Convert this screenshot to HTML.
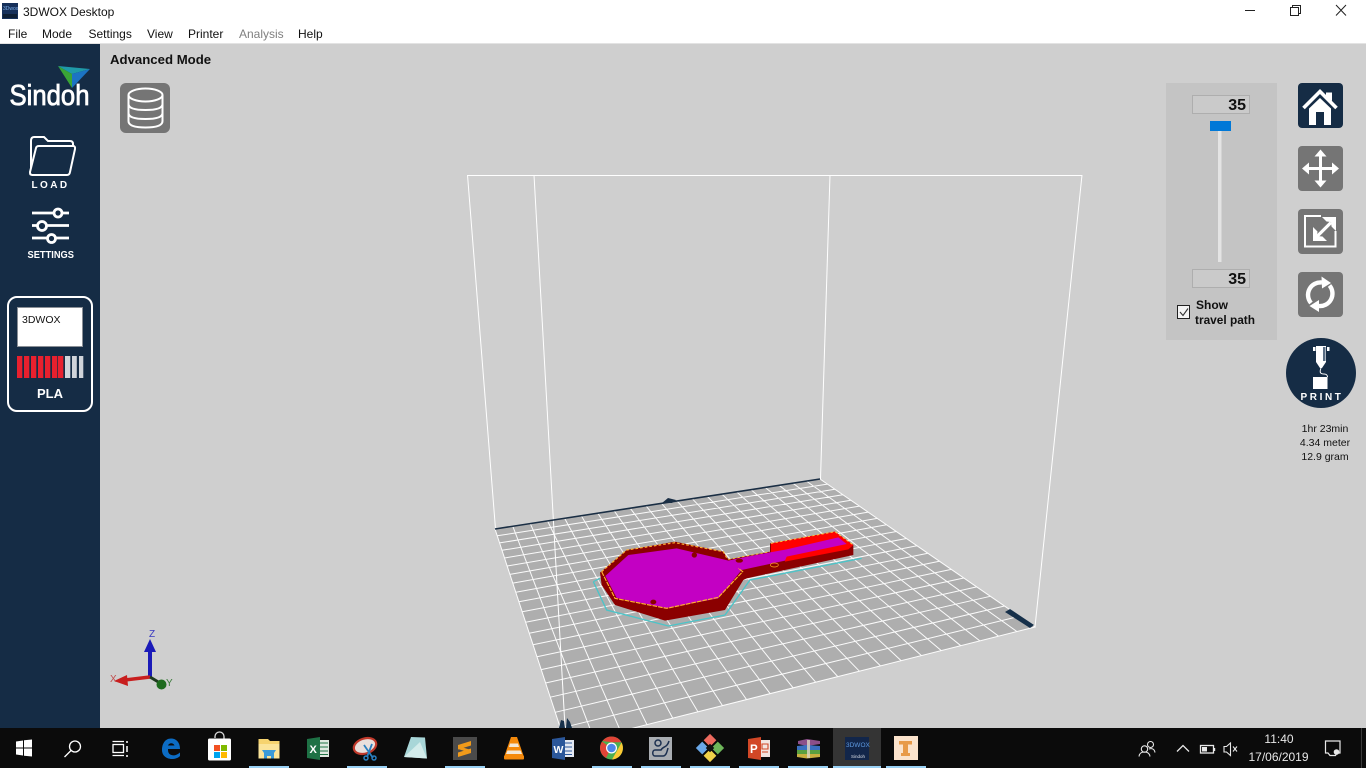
<!DOCTYPE html>
<html><head><meta charset="utf-8"><title>3DWOX Desktop</title>
<style>
html,body{margin:0;padding:0;width:1366px;height:768px;overflow:hidden;background:#cfcfcf}
svg#s{position:absolute;left:0;top:0;font-family:"Liberation Sans",sans-serif}
</style></head><body>
<svg id="s" width="1366" height="768" viewBox="0 0 1366 768" xmlns="http://www.w3.org/2000/svg">
<!-- bed -->
<path d="M495 529L820 479L1035 627L566 745Z" fill="#aeaeae"/>
<path fill="none" stroke="#fff" stroke-width="1" stroke-opacity=".95" d="
M512.8 526.3L593.6 738.1M530.3 523.6L620.6 731.3M547.5 520.9L647 724.7M564.6 518.3L672.8 718.2M581.3 515.7L697.9 711.8M597.8 513.2L722.5 705.6M614.1 510.7L746.6 699.6M630.2 508.2L770.2 693.7M646 505.8L793.2 687.9M661.6 503.4L815.7 682.2M677 501L837.8 676.6M692.2 498.7L859.4 671.2M707.2 496.4L880.5 665.9M721.9 494.1L901.2 660.7M736.5 491.8L921.5 655.6M750.9 489.6L941.3 650.6M765.1 487.4L960.8 645.7M779.1 485.3L979.9 640.9M792.9 483.2L998.6 636.2M806.5 481.1L1017 631.6
M497.2 535.8L827.3 484.1M499.6 542.9L834.9 489.3M502 550.3L842.8 494.7M504.5 558L850.9 500.3M507.2 566L859.4 506.1M509.9 574.4L868.1 512.1M512.8 583.1L877.1 518.4M515.8 592.2L886.5 524.8M518.9 601.8L896.3 531.5M522.2 611.8L906.4 538.5M525.6 622.2L917 545.8M529.2 633.2L927.9 553.3M533 644.7L939.4 561.2M537 656.8L951.3 569.4M541.2 669.6L963.7 578M545.6 683L976.7 586.9M550.3 697.2L990.3 596.3M555.2 712.3L1004.5 606M560.4 728.2L1019.4 616.3
M495 529L566 745M820 479L1035 627L566 745"/>

<!-- title + menu -->
<rect x="0" y="0" width="1366" height="43" fill="#fff"/>
<rect x="0" y="43" width="1366" height="1" fill="#e3e3e3"/>
<rect x="2" y="3" width="16" height="16" fill="#16305a"/>
<rect x="3" y="14" width="14" height="4" fill="#0d1e33"/>
<text x="3" y="10" font-size="5" fill="#7fb0ea">3Dwox</text>
<text x="23" y="16" font-size="12" fill="#111">3DWOX Desktop</text>
<g font-size="12" fill="#111">
<text x="8" y="38">File</text><text x="42" y="38">Mode</text><text x="88.5" y="38">Settings</text><text x="147" y="38">View</text><text x="188" y="38">Printer</text><text x="239" y="38" fill="#808080">Analysis</text><text x="298" y="38">Help</text>
</g>
<g stroke="#222" fill="none" stroke-width="1">
<path d="M1245 10.5H1255"/>
<path d="M1290.5 7.5H1298.5V15.5H1290.5Z M1292.5 7.5V5.5H1300.5V13.5H1298.5"/>
<path d="M1336 5L1346 15.5M1346 5L1336 15.5"/>
</g>

<!-- build volume -->
<g stroke="#fff" stroke-width="1" fill="none">
<path d="M467 175.5H1082"/>
<path d="M467.5 175L495.5 529"/>
<path d="M534 175L566 745"/>
<path d="M830 175L820.5 479"/>
<path d="M1082 175L1035 627"/>
</g>
<path d="M495 529L820 479" stroke="#1a2e44" stroke-width="1.6" fill="none"/>
<path d="M662 503L668 498L676 500L672 503Z" fill="#1a2e44"/>
<path d="M1005 612L1010 609L1034 625L1030 628Z" fill="#16304a"/>
<path d="M559 728L561 720L564 721L565 728ZM566 728L567 718L570 722L572 728Z" fill="#16304a"/>

<!-- model -->
<g transform="translate(590 520) scale(.33333)">
<path d="M10 185L30 175M10 185L50 270L235 318L405 285L480 180L815 115" fill="none" stroke="#4cc4c8" stroke-width="4"/>
<path d="M30 158L110 90L255 65L400 95L415 118L540 95L540 70L735 35L790 75L790 105L470 175L460 180L405 270L225 302L75 255L35 195Z" fill="#8b0000"/>
<path d="M543 70L735 35L790 75L775 88L585 125L585 100L543 100Z" fill="#ff0000"/>
<path d="M46 168L115 105L260 85L400 118L415 122L445 115L540 97L590 88L745 52L770 72L590 110L585 122L455 150L385 235L230 264L80 234Z" fill="#c300c3"/>
<path d="M35 155L75 235L230 265L385 232L458 155L445 145" fill="none" stroke="#ffb030" stroke-width="3.5" stroke-dasharray="14 3"/>
<path d="M35 155L110 90L255 68L400 95L412 117" fill="none" stroke="#ffb030" stroke-width="3.5" stroke-dasharray="8 6"/>
<path d="M415 118L540 95M543 70L735 35L790 75" fill="none" stroke="#ffc040" stroke-width="3" stroke-dasharray="7 7"/>
<ellipse cx="313" cy="105" rx="8" ry="8" fill="#8b0000"/>
<ellipse cx="190" cy="246" rx="9" ry="7" fill="#8b0000"/>
<ellipse cx="448" cy="122" rx="11" ry="6" fill="#8b0000"/>
<ellipse cx="553" cy="135" rx="12" ry="6" fill="#8b0000" stroke="#ffa51e" stroke-width="2"/>
</g>

<!-- axes -->
<path d="M150 677V650" stroke="#1a1ab8" stroke-width="4" fill="none"/>
<path d="M150 639L156 652H144Z" fill="#1a1ab8"/>
<path d="M150 677L125 680" stroke="#c81e1e" stroke-width="3.5" fill="none"/>
<path d="M114 681L127 675L128 686Z" fill="#c81e1e"/>
<path d="M150 677L160 683" stroke="#1f3a1f" stroke-width="3" fill="none"/>
<circle cx="161.5" cy="684.5" r="5" fill="#1e6b1e"/>
<text x="149" y="637" font-size="10" fill="#3a3ac0">Z</text>
<text x="110" y="682" font-size="10" fill="#c05050">X</text>
<text x="166" y="686" font-size="10" fill="#3a7a3a">Y</text>

<!-- left panel -->
<rect x="0" y="44" width="100" height="684" fill="#152c45"/>
<path d="M58 66L90 69L72 74Z" fill="#1f9aa8"/>
<path d="M58 66L72 74L72 88Z" fill="#3aa535"/>
<path d="M90 69L72 74L72 88Z" fill="#1c74c4"/>
<text x="9.5" y="105" font-size="29" fill="#fff" stroke="#fff" stroke-width=".8" textLength="80" lengthAdjust="spacingAndGlyphs">Sindoh</text>
<path d="M31 170V141Q31 137 34 137H44L48 141H70Q73 141 73 144V146" fill="none" stroke="#fff" stroke-width="2"/>
<path d="M31 174.5Q30 175 30 172V172L36 148Q36.5 146 39 146H73Q75.5 146 75 149L70 172Q69.5 175 67 175H32Z" fill="#152c45" stroke="#fff" stroke-width="2"/>
<text x="50.5" y="188" font-size="10" fill="#fff" text-anchor="middle" letter-spacing="2.4" font-weight="bold">LOAD</text>
<g stroke="#fff" stroke-width="2.8" fill="none">
<path d="M32 213H69M32 225.500H69M32 238H69"/>
<circle cx="58" cy="213" r="4" fill="#152c45"/>
<circle cx="42" cy="226" r="4.5" fill="#152c45"/>
<circle cx="51.5" cy="238.5" r="4" fill="#152c45"/>
</g>
<text x="27.500" y="258" font-size="10" fill="#fff" font-weight="bold" textLength="46.500" lengthAdjust="spacingAndGlyphs">SETTINGS</text>
<rect x="8" y="297" width="84" height="114" rx="9" fill="none" stroke="#fff" stroke-width="2"/>
<rect x="17.5" y="307.5" width="65" height="39" fill="#fff" stroke="#8a8f96" stroke-width="1"/>
<text x="22" y="323" font-size="10.5" fill="#111">3DWOX</text>
<g fill="#e8202e">
<rect x="17" y="356" width="5.3" height="22"/><rect x="24" y="356" width="5.3" height="22"/><rect x="31" y="356" width="5.3" height="22"/><rect x="38" y="356" width="5.3" height="22"/><rect x="45" y="356" width="5.3" height="22"/><rect x="52" y="356" width="5.3" height="22"/><rect x="58" y="356" width="5.3" height="22"/>
</g>
<g fill="#d0d4da"><rect x="65" y="356" width="5.3" height="22"/><rect x="72" y="356" width="4.8" height="22"/><rect x="79" y="356" width="4.3" height="22"/></g>
<text x="50" y="398" font-size="13" font-weight="bold" fill="#fff" text-anchor="middle">PLA</text>

<!-- viewport labels -->
<text x="110" y="64" font-size="13.2" font-weight="bold" fill="#111">Advanced Mode</text>
<rect x="120" y="83" width="50" height="50" rx="6" fill="#757575"/>
<g fill="none" stroke="#fff" stroke-width="2">
<ellipse cx="145.5" cy="95" rx="17" ry="6.5"/>
<path d="M128.5 95V121Q128.5 127.5 145.5 127.5T162.500 121V95"/>
<path d="M128.5 104Q128.5 110 145.5 110T162.500 104M128.5 113Q128.5 119 145.5 119T162.500 113"/>
</g>

<!-- slider panel -->
<rect x="1166" y="83" width="111" height="257" fill="#c4c4c4"/>
<rect x="1192.5" y="95.5" width="57" height="18" fill="#cacaca" stroke="#aeaeae"/>
<text x="1246" y="110" font-size="16" font-weight="bold" fill="#111" text-anchor="end">35</text>
<rect x="1218" y="131" width="3.5" height="131" fill="#e4e4e4"/>
<rect x="1210" y="121" width="21" height="10" fill="#0078d7"/>
<rect x="1192.5" y="269.5" width="57" height="18" fill="#cacaca" stroke="#aeaeae"/>
<text x="1246" y="284" font-size="16" font-weight="bold" fill="#111" text-anchor="end">35</text>
<rect x="1177.5" y="305.5" width="12" height="13" fill="#f4f4f4" stroke="#222"/>
<path d="M1180 312L1183 315.5L1188 308.5" fill="none" stroke="#333" stroke-width="1.1"/>
<text x="1196" y="309" font-size="12" font-weight="bold" fill="#111">Show</text>
<text x="1195" y="324" font-size="12" font-weight="bold" fill="#111" textLength="60" lengthAdjust="spacingAndGlyphs">travel path</text>

<!-- right buttons -->
<rect x="1298" y="83" width="45" height="45" rx="4" fill="#152c45"/>
<path d="M1326 92.5H1332V101L1326 96Z" fill="#fff"/>
<path d="M1303.5 108L1320 91.5L1336.5 108" fill="none" stroke="#fff" stroke-width="3.6"/>
<path d="M1320 98L1331 108.5V125H1324V112H1316V125H1309V108.500Z" fill="#fff"/>

<rect x="1298" y="146" width="45" height="45" rx="4" fill="#757575"/>
<g stroke="#fff" fill="none" stroke-width="3"><path d="M1320.5 152V185M1304 168.5H1337"/></g>
<path d="M1320.5 149.5L1326.500 156.500H1314.500ZM1320.5 187.5L1326.500 180.500H1314.500ZM1302 168.5L1309 162.500V174.500ZM1339 168.5L1332 162.500V174.500Z" fill="#fff"/>

<rect x="1298" y="209" width="45" height="45" rx="4" fill="#757575"/>
<path d="M1321 216H1305V246.5H1335.5V231" fill="none" stroke="#fff" stroke-width="2"/>
<path d="M1316.5 237L1331 222.5" stroke="#fff" stroke-width="3.2" fill="none"/>
<path d="M1322 217H1336V231L1331.5 226.5L1331 222L1326.5 221.5Z" fill="#fff"/>
<path d="M1313 227V241H1327L1322.5 236.5L1317 236L1317.5 231.5Z" fill="#fff"/>

<rect x="1298" y="272" width="45" height="45" rx="4" fill="#757575"/>
<g fill="none" stroke="#fff" stroke-width="4.4">
<path d="M1311 303A12.500 12.500 0 0 1 1322 282.5"/>
<path d="M1329.5 285.5A12.500 12.500 0 0 1 1318.5 306"/>
</g>
<path d="M1321.5 276.5L1331 283L1322 288.5Z" fill="#fff"/>
<path d="M1319 300L1309.5 306L1319 312Z" fill="#fff"/>

<circle cx="1321" cy="373" r="35" fill="#152c45"/>
<path d="M1313 347H1315.5V351H1313ZM1327 347H1329.5V351H1327Z" fill="#fff"/>
<path d="M1316 346H1326V362L1322 368H1320L1316 362Z" fill="#fff"/>
<path d="M1323 347H1325.5V361H1323Z" fill="#5a6e84"/>
<path d="M1321 368C1319 373 1321 374 1324 374C1327 374 1327.5 376 1327.5 377" fill="none" stroke="#fff" stroke-width="1"/>
<rect x="1313" y="377" width="14.5" height="12" fill="#fff"/>
<text x="1322" y="400" font-size="10" font-weight="bold" fill="#fff" text-anchor="middle" letter-spacing="2.6">PRINT</text>
<g font-size="10.5" fill="#111" text-anchor="middle">
<text x="1325" y="432">1hr 23min</text>
<text x="1325" y="446">4.34 meter</text>
<text x="1325" y="460">12.9 gram</text>
</g>

<!-- taskbar -->
<rect x="0" y="728" width="1366" height="40" fill="#0b0b0b"/>
<rect x="833" y="728" width="48" height="40" fill="#343434"/>
<g fill="#99d1f5">
<rect x="249" y="766" width="40" height="2"/><rect x="347" y="766" width="40" height="2"/><rect x="445" y="766" width="40" height="2"/><rect x="592" y="766" width="40" height="2"/><rect x="641" y="766" width="40" height="2"/><rect x="690" y="766" width="40" height="2"/><rect x="739" y="766" width="40" height="2"/><rect x="788" y="766" width="40" height="2"/><rect x="833" y="766" width="48" height="2"/><rect x="886" y="766" width="40" height="2"/>
</g>
<path d="M16 741.5L23 740.5V747.5H16ZM24 740.3L32 739.5V747.5H24ZM16 748.5H23V755.5L16 754.5ZM24 748.5H32V756.5L24 755.7Z" fill="#fff"/>
<g fill="none" stroke="#fff" stroke-width="1.3">
<circle cx="75" cy="746.5" r="5.5"/><path d="M71 750.5L64.5 757"/>
<path d="M112.5 741.5H124M112.5 755.5H124"/><rect x="113" y="744.5" width="10.5" height="8"/>
<path d="M127 741V743M127 746V752M127 755V757" stroke-width="1.5"/>
</g>
<!-- edge -->
<path d="M164 749H180C180 742 176 738.5 171 738.5C165 738.5 162 744 162 750C162 756 167 759 172 759C175 759 178 758 180 756V752.5C177 755 174 756 171.5 755C168.5 754 168 752 168 749ZM168 745.5C169 742.5 173.5 742.5 174.5 745.5Z" fill="#0c6cc4" fill-rule="evenodd"/>
<!-- store -->
<path d="M215 738V736.5A4.500 4.500 0 0 1 224 736.5V742" fill="none" stroke="#ddd" stroke-width="1.3"/>
<rect x="208" y="738.5" width="23" height="22" rx="1.5" fill="#fff"/>
<rect x="214" y="745" width="6" height="6" fill="#f25022"/><rect x="221" y="745" width="6" height="6" fill="#7fba00"/><rect x="214" y="752" width="6" height="6" fill="#00a4ef"/><rect x="221" y="752" width="6" height="6" fill="#ffb900"/>
<!-- explorer -->
<path d="M258.5 739H268L270 741H279.5V758.5H258.5Z" fill="#f6d36f"/>
<path d="M258.5 744H279.5V758.5H258.5Z" fill="#fbe49a"/>
<path d="M264 758.5V753H274V758.5H271V756H267V758.5Z" fill="#3a9ad9"/>
<path d="M262 750H276L274 753H264Z" fill="#3a9ad9"/>
<!-- excel -->
<rect x="316" y="740" width="13" height="17" fill="#dfe8e0"/>
<path d="M320 743H328M320 747H328M320 751H328M320 754.5H328" stroke="#217346" stroke-width="1"/>
<path d="M307 739L320 737V760L307 758Z" fill="#1e7145"/>
<text x="309.5" y="753" font-size="11" font-weight="bold" fill="#fff">X</text>
<!-- snip -->
<ellipse cx="365" cy="746" rx="11.5" ry="7.5" fill="#e9dfdc" stroke="#c0392b" stroke-width="2.2" transform="rotate(-18 365 746)"/>
<path d="M364 745L373 758M372 744L367 757" stroke="#2a7fbf" stroke-width="1.8" fill="none"/>
<circle cx="366" cy="758" r="2" fill="none" stroke="#2a7fbf" stroke-width="1.5"/><circle cx="374" cy="758" r="2" fill="none" stroke="#2a7fbf" stroke-width="1.5"/>
<!-- paper -->
<path d="M411 737L425 737.5L427 758.5L404 757Z" fill="#a8d6d8"/>
<path d="M404 757L420 742L427 758.5Z" fill="#d3eceb"/>
<!-- sublime -->
<rect x="453" y="737" width="24" height="23" fill="#4a4a4a"/>
<path d="M458 745L471 741V745.5L458 749.5ZM458 752.5L471 748.5V753L458 757ZM458 746L471 750V753L458 749Z" fill="#f09a1a"/>
<!-- vlc -->
<path d="M511 737H517L524 757H504Z" fill="#f58a0c"/>
<path d="M510 743.5H518L519 747H509ZM507.5 750.5H520.5L522 754H506Z" fill="#f3e8d8"/>
<rect x="504" y="755.5" width="20" height="4" rx="1" fill="#f58a0c"/>
<!-- word -->
<rect x="561" y="740" width="13" height="17" fill="#e4e9f2"/>
<path d="M564 743H572M564 747H572M564 751H572M564 754.5H572" stroke="#2b579a" stroke-width="1"/>
<path d="M552 739L565 737V760L552 758Z" fill="#2b579a"/>
<text x="553.5" y="753" font-size="10.5" font-weight="bold" fill="#fff">W</text>
<!-- chrome -->
<circle cx="611.5" cy="748" r="11.5" fill="#4caf50"/>
<path d="M611.5 736.5A11.500 11.500 0 0 1 621.5 742.3H611.5L602.5 741A11.500 11.500 0 0 1 611.5 736.5Z" fill="#e04437"/>
<path d="M602 741.5A11.500 11.500 0 0 0 606 758L611 748Z" fill="#e04437"/>
<path d="M621.5 742.5A11.500 11.500 0 0 1 612 759.5L618 749Z" fill="#fcc934"/>
<circle cx="611.5" cy="748" r="5.5" fill="#fff"/><circle cx="611.5" cy="748" r="4.3" fill="#4a86e8"/>
<!-- wox -->
<rect x="649" y="737" width="23" height="23" fill="#a9adb2"/>
<g fill="none" stroke="#1c3050" stroke-width="1.5">
<circle cx="658" cy="743" r="3"/><path d="M669 741C667 748 663 746 661 750H655C652 750 652 756 655 756H663C666 756 667 752 668 748"/>
</g>
<!-- git -->
<g transform="rotate(45 710 748)">
<rect x="700" y="738" width="9" height="9" fill="#ed6a5e"/>
<rect x="711" y="738" width="9" height="9" fill="#6eb65a"/>
<rect x="700" y="749" width="9" height="9" fill="#6aa8e8"/>
<rect x="711" y="749" width="9" height="9" fill="#f0d24a"/>
<rect x="707" y="745" width="6" height="6" fill="#111"/>
</g>
<!-- ppt -->
<rect x="757" y="740" width="13" height="17" fill="#f2e4df"/>
<path d="M762 744H768V749H762ZM762 752H768" stroke="#d24726" stroke-width="1.1" fill="none"/>
<path d="M748 739L761 737V760L748 758Z" fill="#d24726"/>
<text x="750" y="753" font-size="11.5" font-weight="bold" fill="#fff">P</text>
<!-- winrar -->
<path d="M798 741L807 739L820 741V744L807 746L798 744Z" fill="#8c4f8a"/>
<path d="M797 746L807 745L820 746V750H797Z" fill="#3a6fc0"/>
<path d="M797 750H820V754H797Z" fill="#5aa040"/>
<path d="M797 754H820V757L807 758.5L797 757Z" fill="#c8b040"/>
<rect x="807" y="740" width="3" height="18" fill="#ddd6c4" opacity=".8"/>
<!-- 3dwox -->
<rect x="845" y="737" width="24" height="23" fill="#12264a"/>
<text x="846" y="747" font-size="6.5" fill="#5f9ae0">3DWOX</text>
<text x="851" y="758" font-size="4.5" fill="#d8dde6">Sindoh</text>
<!-- ink -->
<rect x="894" y="736" width="24" height="24" fill="#fbe3cc"/>
<path d="M899 741H912V744.5H908V753H910V756H901V753H903V744.5H899Z" fill="#e89a48"/>

<!-- tray -->
<g fill="none" stroke="#e8e8e8" stroke-width="1.1">
<circle cx="1144.5" cy="749" r="3.2"/><path d="M1139 756.5C1139.5 752.5 1142 752 1144.5 752C1147 752 1149.5 753 1150 756.5"/>
<circle cx="1150.5" cy="744.5" r="3"/><path d="M1149 749C1152 748 1154.5 749 1155 752.5"/>
<path d="M1177 751.5L1183 745.5L1189 751.5" stroke-width="1.3"/>
<rect x="1200.5" y="745.5" width="13" height="7.5" stroke-width="1.3"/>
<path d="M1224 746.5H1226.5L1230.5 743V755.5L1226.5 752H1224Z"/>
<path d="M1233 746.5L1237 751.5M1237 746.5L1233 751.5"/>
<path d="M1325.5 741H1340V753H1337L1335.5 755.5H1330L1328 753H1325.5Z" stroke-width="1.2"/>
</g>
<rect x="1202" y="747" width="5" height="4.5" fill="#e8e8e8"/><rect x="1214" y="748" width="1.2" height="3" fill="#e8e8e8"/>
<circle cx="1336.5" cy="752" r="2.8" fill="#e8e8e8"/>
<g font-size="12" fill="#e8e8e8" text-anchor="middle">
<text x="1279" y="743">11:40</text>
<text x="1278.5" y="761">17/06/2019</text>
</g>
<rect x="1361" y="728" width="1" height="40" fill="#3a3a3a"/>
</svg>
</body></html>
